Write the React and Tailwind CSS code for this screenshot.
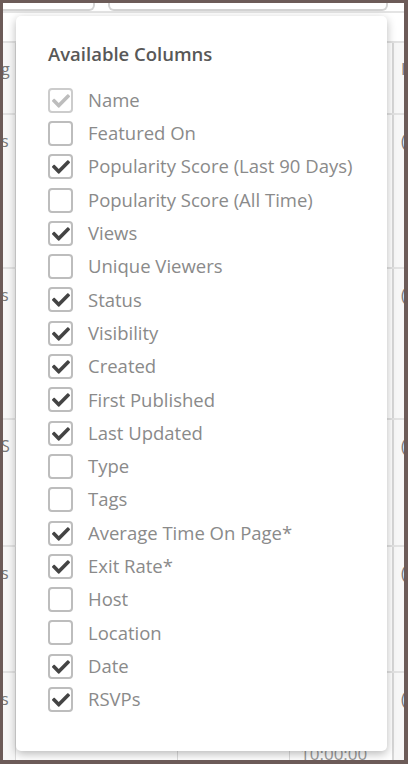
import React from "react";

const columns = [
    { label: "Name", checked: true, disabled: true },
    { label: "Featured On", checked: false },
    { label: "Popularity Score (Last 90 Days)", checked: true },
    { label: "Popularity Score (All Time)", checked: false },
    { label: "Views", checked: true },
    { label: "Unique Viewers", checked: false },
    { label: "Status", checked: true },
    { label: "Visibility", checked: true },
    { label: "Created", checked: true },
    { label: "First Published", checked: true },
    { label: "Last Updated", checked: true },
    { label: "Type", checked: false },
    { label: "Tags", checked: false },
    { label: "Average Time On Page*", checked: true },
    { label: "Exit Rate*", checked: true },
    { label: "Host", checked: false },
    { label: "Location", checked: false },
    { label: "Date", checked: true },
    { label: "RSVPs", checked: true },
];

const rows = [
    { h: "h-[72px]", left: "g", right: "I" },
    { h: "h-[154px]", left: "s", right: "(" },
    { h: "h-[151px]", left: "s", right: "(" },
    { h: "h-[127px]", left: "S", right: "(" },
    { h: "h-[126px]", left: "s", right: "(" },
    { h: "h-[89px]", left: "s", right: "(", last: true },
];

// font-awesome style check
const Check = ({ light }) => (
    <svg viewBox="0 0 512 512" className="w-[18px] h-[18px] mt-[1px]">
        <path
            fill={light ? "#bdbdbd" : "#444"}
            d="M173.9 439.4l-166.4-166.4c-10-10-10-26.2 0-36.2l36.2-36.2c10-10 26.2-10 36.2 0L192 312.7 432.1 72.6c10-10 26.2-10 36.2 0l36.2 36.2c10 10 10 26.2 0 36.2l-294.4 294.4c-10 10-26.2 10-36.2 0z"
        />
    </svg>
);

const ColumnRow = ({ col }) => (
    <label className="flex items-center h-[33.3px] gap-[15px]">
        <span
            className={`w-[25px] h-[25px] rounded-[4px] border-2 flex items-center justify-center shrink-0 ${col.disabled ? "border-[#cccccc]" : "border-[#bdbdbd]"}`}
        >
            {col.checked && <Check light={col.disabled} />}
        </span>
        <span className="text-[18.5px] text-[#8a8a8a] leading-none">{col.label}</span>
    </label>
);

export default function App() {
    return (
        <div className="w-[408px] h-[764px] bg-[#6c5b58] pt-[3px] pl-[3px] pr-[4px] pb-[4px] font-['Open_Sans',sans-serif]">
            <div className="relative w-full h-full bg-white overflow-hidden">
                {/* background table */}
                <div className="flex h-[8px]">
                    <div className="w-[92px] h-[8px] border-b-2 border-r-2 border-[#d4d4d4] rounded-br-[6px]" />
                    <div className="ml-[13px] w-[280px] h-[8px] border-b-2 border-x-2 border-[#d4d4d4] rounded-b-[6px]" />
                </div>
                <div className="h-[30px] border-t-2 border-[#e4e4e4]" />
                {rows.map((r, i) => (
                    <div
                        key={i}
                        className={`grid grid-cols-[12px_162px_112px_103px_12px] ${r.h} border-t-2 border-[#e2e2e2] text-[#777] text-[16px]`}
                    >
                        <div className="bg-[#f7f7f7] overflow-hidden pt-[14px]">
                            <span className="block -ml-[2px]">{r.left}</span>
                        </div>
                        <div className="border-l border-[#dcdcdc]" />
                        <div className="border-l border-[#dcdcdc]" />
                        <div className="border-l border-[#dcdcdc] flex flex-col justify-end">
                            {r.last && (
                                <span className="pl-[10px] -mb-[2px] text-[#999] text-[17px] leading-none">10:00:00</span>
                            )}
                        </div>
                        <div className="border-l-2 border-[#d8d8d8] bg-[#f7f7f7] pt-[14px] pl-[7px] overflow-hidden">
                            {r.right}
                        </div>
                    </div>
                ))}

                {/* column picker popover */}
                <div className="absolute left-[13px] top-[13px] w-[371px] h-[735px] bg-white rounded-[5px] shadow-[0_3px_10px_rgba(0,0,0,0.28)] pl-[32px] pt-[29px]">
                    <h3 className="text-[18.5px] font-semibold text-[#585858] leading-none">Available Columns</h3>
                    <div className="mt-[20px] flex flex-col">
                        {columns.map((c) => (
                            <ColumnRow key={c.label} col={c} />
                        ))}
                    </div>
                </div>
            </div>
        </div>
    );
}
